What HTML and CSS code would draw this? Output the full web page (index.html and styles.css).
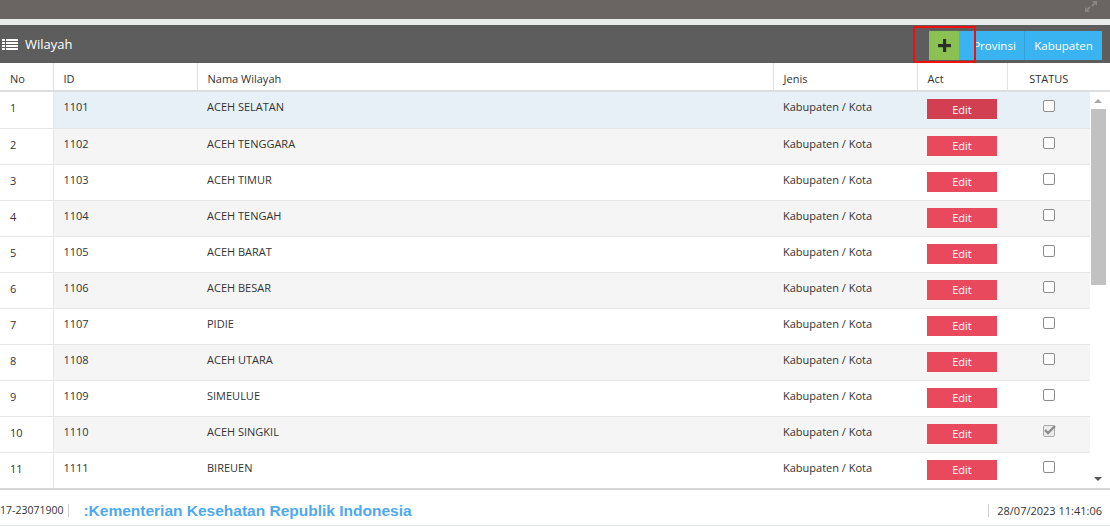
FILE: index.html
```html
<!DOCTYPE html>
<html lang="id">
<head>
  <meta charset="UTF-8" />
  <title>Wilayah</title>
  <link rel="stylesheet" href="styles.css">
</head>
<body>

<div class="topbar">
  <svg class="expand-icon" width="14" height="13" viewBox="0 0 14 13">
    <path d="M8 1h5v5l-1.8-1.8-2.6 2.6-1.4-1.4 2.6-2.6z M6 12H1V7l1.8 1.8 2.6-2.6 1.4 1.4-2.6 2.6z" fill="#8a8583"/>
  </svg>
</div>

<div class="panel">
  <div class="panel-head">
    <div class="panel-title">
      <svg width="16" height="11" viewBox="0 0 16 11">
        <rect x="0" y="0" width="3" height="2" fill="#fff"/>
        <rect x="4" y="0" width="12" height="2" fill="#fff"/>
        <rect x="0" y="3" width="3" height="2" fill="#fff"/>
        <rect x="4" y="3" width="12" height="2" fill="#fff"/>
        <rect x="0" y="6" width="3" height="2" fill="#fff"/>
        <rect x="4" y="6" width="12" height="2" fill="#fff"/>
        <rect x="0" y="9" width="3" height="2" fill="#fff"/>
        <rect x="4" y="9" width="12" height="2" fill="#fff"/>
      </svg>
      <span>Wilayah</span>
    </div>
    <div class="panel-tools">
      <button class="btn-add" title="Tambah">
        <svg width="13" height="13" viewBox="0 0 13 13">
          <rect x="5" y="0" width="3.2" height="13" fill="#2b2f28"/>
          <rect x="0" y="5" width="13" height="3.2" fill="#2b2f28"/>
        </svg>
      </button>
      <button class="btn-blue btn-prov">Provinsi</button>
      <button class="btn-blue btn-kab">Kabupaten</button>
      <span class="highlight-box"></span>
    </div>
  </div>

  <table class="grid grid-head">
    <colgroup>
      <col style="width:53px"><col style="width:144px"><col style="width:576px">
      <col style="width:144px"><col style="width:90px"><col style="width:83px"><col>
    </colgroup>
    <tr>
      <th>No</th>
      <th>ID</th>
      <th>Nama Wilayah</th>
      <th>Jenis</th>
      <th>Act</th>
      <th class="center">STATUS</th>
      <th class="gutter"></th>
    </tr>
  </table>

  <div class="grid-body">
    <table class="grid">
      <colgroup>
        <col style="width:53px"><col style="width:144px"><col style="width:576px">
        <col style="width:144px"><col style="width:90px"><col>
      </colgroup>
      <tbody id="rows"></tbody>
    </table>
    <div class="scrollbar">
      <span class="scroll-btn up"></span>
      <span class="scroll-thumb"></span>
      <span class="scroll-track"></span>
      <span class="scroll-btn down"></span>
    </div>
  </div>
</div>

<div class="footer">
  <span class="footer-version">17-23071900</span>
  <div class="footer-marquee">:Kementerian Kesehatan Republik Indonesia</div>
  <span class="footer-clock">28/07/2023 11:41:06</span>
</div>

<script>
  const wilayah = [
    ['1101', 'ACEH SELATAN', 0], ['1102', 'ACEH TENGGARA', 0], ['1103', 'ACEH TIMUR', 0],
    ['1104', 'ACEH TENGAH', 0], ['1105', 'ACEH BARAT', 0], ['1106', 'ACEH BESAR', 0],
    ['1107', 'PIDIE', 0], ['1108', 'ACEH UTARA', 0], ['1109', 'SIMEULUE', 0],
    ['1110', 'ACEH SINGKIL', 1], ['1111', 'BIREUEN', 0]
  ];

  const check = '<svg width="12" height="10" viewBox="0 0 12 10"><path d="M1 5l3 3 7-7" fill="none" stroke="#8c8c8c" stroke-width="2.4"/></svg>';

  let html = '';
  wilayah.forEach((w, i) => {
    html += '<tr' + (i === 0 ? ' class="hover"' : '') + '>' +
      '<td class="no">' + (i + 1) + '</td>' +
      '<td>' + w[0] + '</td>' +
      '<td>' + w[1] + '</td>' +
      '<td>Kabupaten / Kota</td>' +
      '<td><button class="btn-edit">Edit</button></td>' +
      '<td class="center"><span class="chk' + (w[2] ? ' checked' : '') + '">' + (w[2] ? check : '') + '</span></td>' +
      '</tr>';
  });
  document.getElementById('rows').innerHTML = html;
</script>

</body>
</html>
```

FILE: styles.css
```css
body {
  margin: 0;
  font-family: "Open Sans", Arial, sans-serif;
  font-size: 11px;
  color: #333;
  background: #e8ecea;
}

.topbar {
  height: 19px;
  background: #6a6462;
  margin-bottom: 6px;
  display: flex;
  justify-content: flex-end;
  align-items: flex-start;
}

.expand-icon {
  margin-right: 12px;
}

.panel {
  background: #fff;
}

.panel-head {
  height: 38px;
  background: #5d5d5d;
  color: #fff;
  display: flex;
  justify-content: space-between;
  align-items: center;
}

.panel-title {
  display: flex;
  align-items: center;
  gap: 7px;
  padding-left: 2px;
  font-size: 13px;
}

.panel-tools {
  position: relative;
  display: flex;
  height: 29px;
  margin-top: 2px;
  padding-right: 8px;
}

.panel-tools button {
  border: none;
  margin: 0;
  height: 29px;
  font-family: "Open Sans", Arial, sans-serif;
  font-size: 11.5px;
  color: #fff;
  cursor: pointer;
}

.btn-add {
  width: 30px;
  background: #8bc152;
  display: flex;
  align-items: center;
  justify-content: center;
  padding: 0;
}

.btn-blue {
  background: #3ab4f1;
  padding: 0;
}

.btn-prov {
  width: 66px;
  padding-left: 6px !important;
  border-right: 1px solid #2fa4dc !important;
}

.btn-kab {
  width: 77px;
}

.highlight-box {
  position: absolute;
  left: -16px;
  top: -5px;
  width: 59px;
  height: 33px;
  border: 2px solid #f20f0f;
}

.grid {
  border-collapse: collapse;
  table-layout: fixed;
  background: #fff;
}

.grid-head {
  width: 1110px;
}

.grid-head th {
  height: 24px;
  padding: 3px 10px 0;
  font-weight: normal;
  text-align: left;
  border-right: 1px solid #e2e2e2;
  border-bottom: 2px solid #dedede;
}

.grid-head th:nth-last-child(2),
.grid-head th.gutter {
  border-right: none;
}

.grid-body {
  height: 396px;
  overflow: hidden;
  display: flex;
  background: #fff;
  border-bottom: 2px solid #d6d6d6;
}

.grid-body .grid {
  width: 1090px;
  flex: none;
  align-self: flex-start;
}

.grid-body tr {
  height: 36px;
}

.grid-body td {
  padding: 5px 10px 0;
  vertical-align: top;
  line-height: 20px;
  border-bottom: 1px solid #e6e6e6;
  white-space: nowrap;
}

.grid-body tr:nth-child(even) td {
  background: #f5f5f5;
}

.grid-body tr.hover td {
  background: #e7f0f7;
}

.grid-body td.no {
  background: #fff !important;
  border-right: 1px solid #e6e6e6;
  padding-top: 6px;
}

.center {
  text-align: center !important;
}

.btn-edit {
  display: block;
  width: 70px;
  height: 20px;
  margin-top: 2px;
  border: none;
  padding: 0;
  background: #e8495c;
  color: #fff;
  font-family: "Open Sans", Arial, sans-serif;
  font-size: 11px;
  cursor: pointer;
}

.hover .btn-edit {
  background: #d13f51;
}

.chk {
  display: inline-block;
  box-sizing: border-box;
  width: 12px;
  height: 12px;
  margin-top: 3px;
  border: 1px solid #8c8c8c;
  border-radius: 2px;
  background: #fff;
  vertical-align: top;
  position: relative;
}

.chk.checked {
  background: #ececec;
  border-color: #aaa;
}

.chk svg {
  position: absolute;
  left: 0;
  top: -1px;
}

.scrollbar {
  width: 20px;
  display: flex;
  flex-direction: column;
  background: #fff;
}

.scroll-btn {
  height: 17px;
  flex: none;
  position: relative;
}

.scroll-btn::after {
  content: "";
  position: absolute;
  left: 4px;
  border-left: 4px solid transparent;
  border-right: 4px solid transparent;
}

.scroll-btn.up::after {
  top: 7px;
  border-bottom: 4px solid #a9a9a9;
}

.scroll-btn.down::after {
  top: 6px;
  border-top: 4px solid #555;
}

.scroll-thumb {
  height: 176px;
  width: 15px;
  margin-left: 1px;
  flex: none;
  background: #c1c1c1;
}

.scroll-track {
  flex: 1;
}

.footer {
  height: 35px;
  background: #fff;
  display: flex;
  align-items: center;
  padding-top: 6px;
  box-sizing: border-box;
}

.footer-version {
  font-size: 10.5px;
  padding-right: 5px;
  border-right: 1px solid #d0d0d0;
  line-height: 13px;
}

.footer-marquee {
  flex: 1;
  margin-left: 14px;
  white-space: nowrap;
  font-family: "Liberation Sans", Arial, sans-serif;
  font-weight: bold;
  font-size: 15.5px;
  color: #4ea9ee;
}

.footer-clock {
  padding-left: 8px;
  padding-right: 8px;
  border-left: 1px solid #d0d0d0;
  line-height: 13px;
}
```
